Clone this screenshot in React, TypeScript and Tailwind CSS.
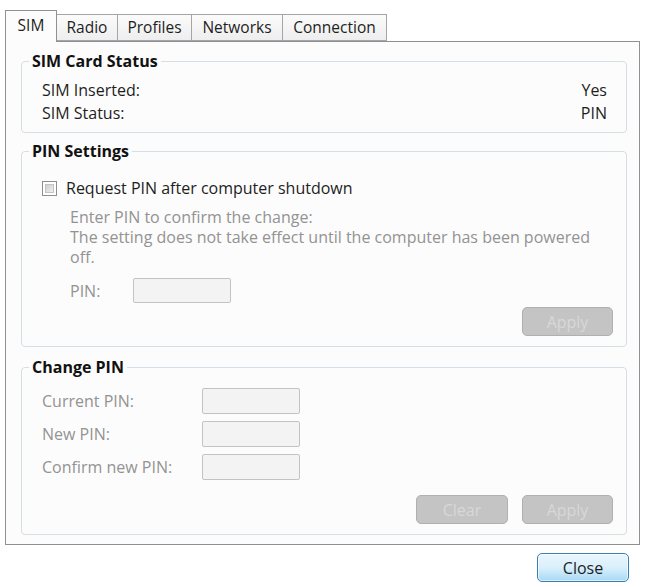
import React from 'react';

const tabs = [
  { label: 'SIM', w: 'w-[52px]' },
  { label: 'Radio', w: 'w-[61px]' },
  { label: 'Profiles', w: 'w-[74px]' },
  { label: 'Networks', w: 'w-[91px]' },
  { label: 'Connection', w: 'w-[104px]' },
];

const GroupBox: React.FC<{ title: string; className?: string; innerClass?: string; children: React.ReactNode }> = ({
  title,
  className = '',
  innerClass = '',
  children,
}) => (
  <fieldset className={`border border-[#d5dfe5] rounded-[4px] ${className}`}>
    <legend className="ml-[7px] px-[3px] font-bold text-[#111] leading-[20px]">{title}</legend>
    <div className={innerClass}>{children}</div>
  </fieldset>
);

const DisabledButton: React.FC<{ label: string; className?: string }> = ({ label, className = '' }) => (
  <button
    disabled
    className={`h-[29px] rounded-[5px] border border-[#adb1b4] bg-[#c4c4c4] text-[#d8d8d8] ${className}`}
  >
    {label}
  </button>
);

const Field: React.FC<{ className?: string }> = ({ className = '' }) => (
  <div className={`w-[98px] rounded-[2px] border border-[#c3c3c3] bg-[#f3f3f3] ${className}`} />
);

export default function App() {
  return (
    <div className="w-[645px] h-[587px] bg-white font-['Open_Sans',sans-serif] text-[16px] text-[#1e1e1e] pt-[10px] pl-[5px] pr-[5px]">
      {/* Tabs */}
      <div className="flex items-end h-[31px] relative z-10 text-[15.5px]">
        {tabs.map((t, i) =>
          i === 0 ? (
            <div
              key={t.label}
              className={`${t.w} h-[32px] -mb-px border border-b-0 border-[#8e9094] bg-[#fcfcfc] flex items-center justify-center pb-[2px]`}
            >
              {t.label}
            </div>
          ) : (
            <div
              key={t.label}
              className={`${t.w} h-[27px] border border-l-0 border-[#a3a5a8] bg-gradient-to-b from-[#fbfbfb] to-[#eeeeee] flex items-center justify-center`}
            >
              {t.label}
            </div>
          )
        )}
      </div>

      {/* Panel */}
      <div className="h-[504px] border border-[#8e9094] bg-[#fcfcfc] pt-[9px] pl-[15px] pr-[12px] flex flex-col gap-[8px]">
        <GroupBox title="SIM Card Status" className="h-[82px]" innerClass="pt-[8px] pl-[20px] pr-[19px]">
          <div className="flex justify-between leading-[23px]">
            <span>SIM Inserted:</span>
            <span>Yes</span>
          </div>
          <div className="flex justify-between leading-[23px]">
            <span>SIM Status:</span>
            <span>PIN</span>
          </div>
        </GroupBox>

        <GroupBox title="PIN Settings" className="h-[206px]" innerClass="pl-[20px] pr-[13px]">
          <div className="flex items-center gap-[9px] h-[20px] mt-[17px]">
            <div className="w-[15px] h-[15px] border border-[#8f8f8f] bg-white p-[2px]">
              <div className="w-full h-full bg-gradient-to-br from-[#cfcfcf] to-[#f0f0f0] border border-[#c4c4c4]" />
            </div>
            <span className="leading-[20px]">Request PIN after computer shutdown</span>
          </div>
          <div className="ml-[28px] text-[#939393]">
            <p className="mt-[9px] leading-[20px] w-[540px]">
              Enter PIN to confirm the change:
              <br />
              The setting does not take effect until the computer has been powered off.
            </p>
            <div className="flex items-center mt-[11px]">
              <span className="w-[63px]">PIN:</span>
              <Field className="h-[25px]" />
            </div>
          </div>
          <div className="flex justify-end mt-[4px]">
            <DisabledButton label="Apply" className="w-[91px]" />
          </div>
        </GroupBox>

        <GroupBox title="Change PIN" className="h-[178px] mt-[2px]" innerClass="pl-[20px] pr-[13px]">
          <div className="flex flex-col gap-[7px] pt-[11px] text-[#939393]">
            {['Current PIN:', 'New PIN:', 'Confirm new PIN:'].map((l) => (
              <div key={l} className="flex items-center">
                <span className="w-[160px]">{l}</span>
                <Field className="h-[26px]" />
              </div>
            ))}
          </div>
          <div className="flex justify-end gap-[14px] mt-[15px]">
            <DisabledButton label="Clear" className="w-[92px]" />
            <DisabledButton label="Apply" className="w-[91px]" />
          </div>
        </GroupBox>
      </div>

      {/* Footer */}
      <div className="flex justify-end mt-[8px] pr-[11px]">
        <button className="w-[92px] h-[29px] rounded-[5px] border border-[#3c7fb1] bg-gradient-to-b from-[#eaf6fd] via-[#d9f0fc] to-[#a7d9f5] text-[#1e1e1e] shadow-[inset_0_0_0_1px_rgba(255,255,255,0.6)]">
          Close
        </button>
      </div>
    </div>
  );
}
